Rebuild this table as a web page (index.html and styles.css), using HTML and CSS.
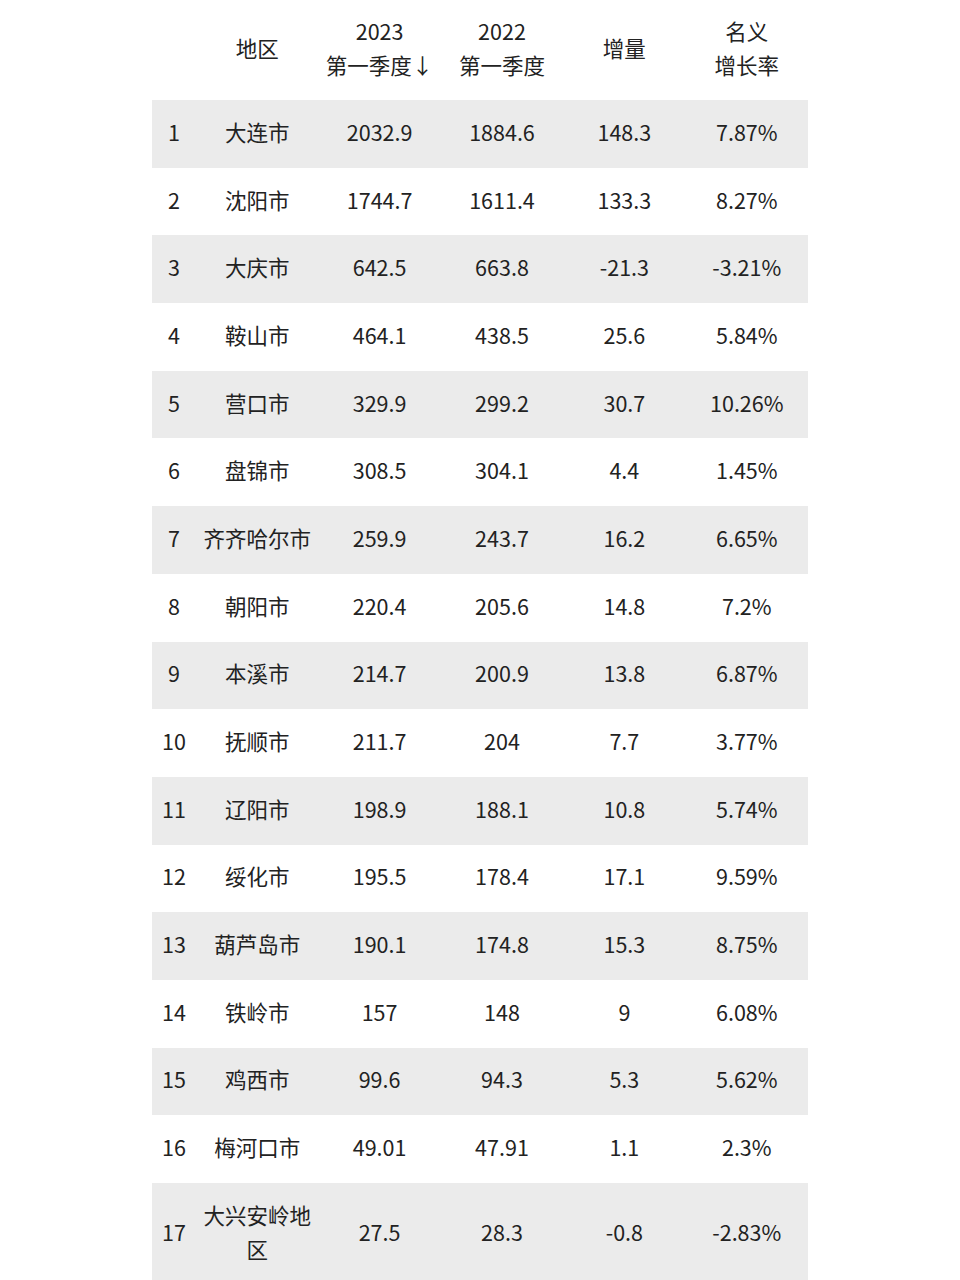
FILE: index.html
```html
<!DOCTYPE html>
<html lang="zh-CN">
<head>
<meta charset="utf-8">
<link rel="stylesheet" href="styles.css">
</head>
<body>
<table class="gdp">
  <colgroup>
    <col class="c-rank"><col class="c-col"><col class="c-col"><col class="c-col"><col class="c-col"><col class="c-col">
  </colgroup>
  <thead>
    <tr>
      <th></th>
      <th>地区</th>
      <th>2023<br>第一季度↓</th>
      <th>2022<br>第一季度</th>
      <th>增量</th>
      <th>名义<br>增长率</th>
    </tr>
  </thead>
  <tbody>
    <tr><td>1</td><td>大连市</td><td>2032.9</td><td>1884.6</td><td>148.3</td><td>7.87%</td></tr>
    <tr><td>2</td><td>沈阳市</td><td>1744.7</td><td>1611.4</td><td>133.3</td><td>8.27%</td></tr>
    <tr><td>3</td><td>大庆市</td><td>642.5</td><td>663.8</td><td>-21.3</td><td>-3.21%</td></tr>
    <tr><td>4</td><td>鞍山市</td><td>464.1</td><td>438.5</td><td>25.6</td><td>5.84%</td></tr>
    <tr><td>5</td><td>营口市</td><td>329.9</td><td>299.2</td><td>30.7</td><td>10.26%</td></tr>
    <tr><td>6</td><td>盘锦市</td><td>308.5</td><td>304.1</td><td>4.4</td><td>1.45%</td></tr>
    <tr><td>7</td><td>齐齐哈尔市</td><td>259.9</td><td>243.7</td><td>16.2</td><td>6.65%</td></tr>
    <tr><td>8</td><td>朝阳市</td><td>220.4</td><td>205.6</td><td>14.8</td><td>7.2%</td></tr>
    <tr><td>9</td><td>本溪市</td><td>214.7</td><td>200.9</td><td>13.8</td><td>6.87%</td></tr>
    <tr><td>10</td><td>抚顺市</td><td>211.7</td><td>204</td><td>7.7</td><td>3.77%</td></tr>
    <tr><td>11</td><td>辽阳市</td><td>198.9</td><td>188.1</td><td>10.8</td><td>5.74%</td></tr>
    <tr><td>12</td><td>绥化市</td><td>195.5</td><td>178.4</td><td>17.1</td><td>9.59%</td></tr>
    <tr><td>13</td><td>葫芦岛市</td><td>190.1</td><td>174.8</td><td>15.3</td><td>8.75%</td></tr>
    <tr><td>14</td><td>铁岭市</td><td>157</td><td>148</td><td>9</td><td>6.08%</td></tr>
    <tr><td>15</td><td>鸡西市</td><td>99.6</td><td>94.3</td><td>5.3</td><td>5.62%</td></tr>
    <tr><td>16</td><td>梅河口市</td><td>49.01</td><td>47.91</td><td>1.1</td><td>2.3%</td></tr>
    <tr><td>17</td><td>大兴安岭地区</td><td>27.5</td><td>28.3</td><td>-0.8</td><td>-2.83%</td></tr>
  </tbody>
</table>
</body>
</html>
```
FILE: styles.css
```css
html, body {
  margin: 0;
  padding: 0;
  background: #ffffff;
}
body {
  font-family: "Noto Sans CJK SC", "Noto Sans", sans-serif;
  color: #222222;
  font-size: 21.5px;
}
.gdp {
  margin-left: 152px;
  width: 656px;
  border-collapse: collapse;
  table-layout: fixed;
}
.c-rank { width: 44px; }
.c-col { width: 122.4px; }
.gdp th, .gdp td {
  text-align: center;
  vertical-align: middle;
  line-height: 34px;
  padding: 14.85px 4px 18.85px;
  font-weight: 400;
}
.gdp th {
  padding-top: 14px;
  padding-bottom: 18px;
}
.gdp td:first-child {
  padding-left: 0;
  padding-right: 0;
}
.gdp tbody tr:nth-child(odd) {
  background: #ebebeb;
}
```
